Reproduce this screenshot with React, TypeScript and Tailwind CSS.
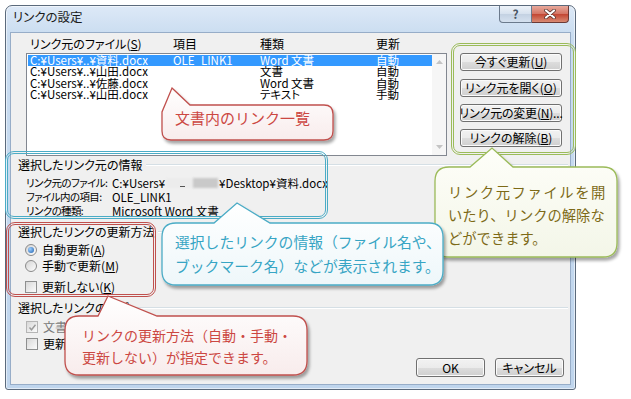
import React from "react";

const btn =
  "flex items-center justify-center whitespace-nowrap rounded-[3px] border border-[#707070] bg-[linear-gradient(#f2f2f2,#ebebeb_50%,#dddddd_50%,#cfcfcf)] text-[12px] leading-none text-black shadow-[inset_0_0_0_1px_#fbfbfb]";

const rows = [
  { file: "C:¥Users¥..¥資料.docx", item: "OLE_LINK1", type: "Word 文書", mode: "自動", sel: true },
  { file: "C:¥Users¥..¥山田.docx", item: "", type: "文書", mode: "自動" },
  { file: "C:¥Users¥..¥佐藤.docx", item: "", type: "Word 文書", mode: "自動" },
  { file: "C:¥Users¥..¥山田.docx", item: "", type: "テキスト", mode: "手動" },
];

function Radio({ on }: { on?: boolean }) {
  return (
    <span className="flex h-[12px] w-[12px] shrink-0 items-center justify-center rounded-full border border-[#8a8a8a] bg-[linear-gradient(135deg,#d4d4d4,#fdfdfd)]">
      {on && <span className="h-[6px] w-[6px] rounded-full bg-[radial-gradient(circle_at_35%_35%,#9fd0ff,#1c5fae)]" />}
    </span>
  );
}

function Check({ on, off }: { on?: boolean; off?: boolean }) {
  return (
    <span
      className={
        "flex h-[12px] w-[12px] shrink-0 items-center justify-center border bg-[linear-gradient(135deg,#d8d8d8,#fbfbfb)] " +
        (off ? "border-[#b5b5b5]" : "border-[#8e8f8f]")
      }
    >
      {on && (
        <svg width="9" height="9" viewBox="0 0 9 9">
          <path d="M1.5 4.5 L3.5 6.8 L7.5 1.8" fill="none" stroke="#9a9a9a" strokeWidth="1.4" />
        </svg>
      )}
    </span>
  );
}

function Group({ label }: { label: string }) {
  return (
    <div className="ml-[7px] mr-[2px] flex h-[14px] items-center">
      <span className="whitespace-nowrap leading-[14px]">{label}</span>
      <span className="ml-[4px] h-[2px] flex-1 border-t border-b border-t-[#d5dfe5] border-b-white" />
    </div>
  );
}

function TitleBar() {
  return (
    <div className="flex h-[26px] items-start">
      <span className="ml-[7px] mt-[3px] text-[12.5px] leading-[16px] text-[#1b1b1b]">リンクの設定</span>
      <div className="ml-auto mr-[6px] flex h-[17px]">
        <div className="flex w-[33px] items-center justify-center rounded-bl-[4px] border border-t-0 border-[#6b7a8c] bg-[linear-gradient(#eef3f9,#d6e1ee_50%,#c3d1e2_50%,#d5e1ef)] text-[12px] font-bold leading-none text-[#4a5563]">
          ?
        </div>
        <div className="flex w-[37px] items-center justify-center rounded-br-[4px] border border-l-0 border-t-0 border-[#6b3a36] bg-[linear-gradient(#e8a99c,#d47463_50%,#c24431_50%,#d98a72)]">
          <svg width="12" height="10" viewBox="0 0 12 10">
            <path d="M2 1.5 L10 8.5 M10 1.5 L2 8.5" stroke="#4a2a26" strokeWidth="3.6" strokeLinecap="round" />
            <path d="M2 1.5 L10 8.5 M10 1.5 L2 8.5" stroke="#ffffff" strokeWidth="2.2" strokeLinecap="round" />
          </svg>
        </div>
      </div>
    </div>
  );
}

function Callouts() {
  return (
    <svg className="pointer-events-none absolute left-0 top-0" width="631" height="399" viewBox="0 0 631 399">
      <defs>
        <filter id="sh" x="-10%" y="-10%" width="130%" height="140%">
          <feDropShadow dx="2" dy="3" stdDeviation="1.4" floodColor="#000" floodOpacity="0.35" />
        </filter>
        <linearGradient id="gr" x1="0" y1="0" x2="0" y2="1">
          <stop offset="0" stopColor="#ffffff" />
          <stop offset="1" stopColor="#f8ecec" />
        </linearGradient>
        <linearGradient id="gb" x1="0" y1="0" x2="0" y2="1">
          <stop offset="0" stopColor="#ffffff" />
          <stop offset="1" stopColor="#eef7fa" />
        </linearGradient>
        <linearGradient id="gg" x1="0" y1="0" x2="0" y2="1">
          <stop offset="0" stopColor="#fefef9" />
          <stop offset="1" stopColor="#f3f6e8" />
        </linearGradient>
      </defs>
      <path
        d="M172 88 L190 105 L324 105 Q333 105 333 114 L333 131 Q333 140 324 140 L171 140 Q162 140 162 131 L162 112 Z"
        fill="url(#gr)"
        stroke="#c0504d"
        strokeWidth="1.3"
        filter="url(#sh)"
      />
      <path
        d="M449 167 L470 167 L492 148 L513 167 L603 167 Q617 167 617 181 L617 243 Q617 257 603 257 L449 257 Q435 257 435 243 L435 181 Q435 167 449 167 Z"
        fill="url(#gg)"
        stroke="#9bbb59"
        strokeWidth="1.3"
        filter="url(#sh)"
      />
      <path
        d="M176 223 L214 223 L237 203 L270 223 L429 223 Q443 223 443 237 L443 271 Q443 285 429 285 L176 285 Q162 285 162 271 L162 237 Q162 223 176 223 Z"
        fill="url(#gb)"
        stroke="#4bacc6"
        strokeWidth="1.3"
        filter="url(#sh)"
      />
      <path
        d="M108 296 L157 316 L293 316 Q307 316 307 330 L307 361 Q307 375 293 375 L79 375 Q65 375 65 361 L65 330 Q65 316 79 316 L98 316 Z"
        fill="url(#gr)"
        stroke="#c0504d"
        strokeWidth="1.3"
        filter="url(#sh)"
      />
    </svg>
  );
}

export default function App() {
  return (
    <div className="relative h-[399px] w-[631px] overflow-hidden bg-white font-['Noto_Sans_CJK_JP',sans-serif] text-black">
      <div className="pl-[5px] pt-[5px] [font-feature-settings:'palt']">
        <div className="flex h-[385px] w-[571px] flex-col rounded-t-[7px] rounded-b-[3px] border border-[#5b6a7c] bg-[linear-gradient(#dde9f7,#c9dcf0_30px,#bfd5ed)] shadow-[inset_0_0_0_1px_rgba(255,255,255,0.55)]">
          <TitleBar />
          <div className="mx-[4px] mb-[4px] flex flex-1 flex-col border border-[#97adc8] bg-[#f0f0f0] text-[12px]">
            <div className="flex">
              <div className="ml-[15px] w-[421px]">
                <div className="mt-[4px] grid h-[14px] grid-cols-[143px_87px_116px_1fr] whitespace-nowrap pl-[4px] leading-[14px]">
                  <span>
                    リンク元のファイル(<u>S</u>)
                  </span>
                  <span>項目</span>
                  <span>種類</span>
                  <span>更新</span>
                </div>
                <div className="mt-[2px] flex h-[103px] border border-[#828790] bg-white">
                  <div className="flex-1 pl-[1px] pt-[1px] text-[11.5px] leading-[11.25px]">
                    {rows.map((r, i) => (
                      <div
                        key={i}
                        className={
                          "grid h-[11.25px] grid-cols-[143px_87px_116px_1fr] whitespace-nowrap pl-[2px] " +
                          (r.sel ? "bg-[#3399ff] text-white" : "")
                        }
                      >
                        <span>{r.file}</span>
                        <span>{r.item}</span>
                        <span>{r.type}</span>
                        <span>{r.mode}</span>
                      </div>
                    ))}
                  </div>
                  <div className="flex w-[14px] flex-col items-center justify-between bg-[#f6f6f6] py-[6px]">
                    <svg width="7" height="4" viewBox="0 0 7 4">
                      <path d="M0 4 L3.5 0 L7 4 Z" fill="#c4c4c4" />
                    </svg>
                    <svg width="7" height="4" viewBox="0 0 7 4">
                      <path d="M0 0 L3.5 4 L7 0 Z" fill="#c4c4c4" />
                    </svg>
                  </div>
                </div>
              </div>
              <div className="ml-[13px] mt-[20px] flex w-[102px] flex-col">
                <div className={btn + " h-[18px]"}>
                  今すぐ更新(<u>U</u>)
                </div>
                <div className={btn + " mt-[8px] h-[18px]"}>
                  リンク元を開く(<u>O</u>)
                </div>
                <div className={btn + " mt-[7px] h-[18px] tracking-[-0.2px]"}>
                  リンク元の変更(<u>N</u>)...
                </div>
                <div className={btn + " mt-[7px] h-[18px]"}>
                  リンクの解除(<u>B</u>)
                </div>
              </div>
            </div>

            <div className="mt-[2px]">
              <Group label="選択したリンク元の情報" />
            </div>
            <div className="ml-[15px] mt-[4px] whitespace-nowrap text-[11.5px] leading-[14px]">
              <div className="flex h-[14px] items-center">
                <span className="w-[86px] shrink-0 text-[10.5px] tracking-[-0.6px]">リンク元のファイル:</span>
                <span>C:¥Users¥</span>
                <span className="relative mx-[1px] inline-block h-[12px] w-[52px]">
                  <span className="absolute left-0 top-[1px] h-[10px] w-[28px] bg-[#ececec] blur-[1px]" />
                  <span className="absolute left-[14px] top-[9px] h-[1px] w-[5px] bg-[#555]" />
                  <span className="absolute left-[27px] top-[1px] h-[10px] w-[25px] bg-[#c9c9c9] blur-[1px]" />
                </span>
                <span>¥Desktop¥資料.docx</span>
              </div>
              <div className="flex h-[14px] items-center">
                <span className="w-[86px] shrink-0 text-[10.5px] tracking-[-0.6px]">ファイル内の項目:</span>
                <span>OLE_LINK1</span>
              </div>
              <div className="flex h-[14px] items-center">
                <span className="w-[86px] shrink-0 text-[10.5px] tracking-[-0.6px]">リンクの種類:</span>
                <span>Microsoft Word 文書</span>
              </div>
            </div>

            <div className="mt-[7px]">
              <Group label="選択したリンクの更新方法" />
            </div>
            <div className="ml-[14px] mt-[3px]">
              <div className="flex h-[16px] items-center gap-[5px]">
                <Radio on />
                <span>
                  自動更新(<u>A</u>)
                </span>
              </div>
              <div className="flex h-[16px] items-center gap-[5px]">
                <Radio />
                <span>
                  手動で更新(<u>M</u>)
                </span>
              </div>
              <div className="mt-[5px] flex h-[16px] items-center gap-[5px]">
                <Check />
                <span>
                  更新しない(<u>K</u>)
                </span>
              </div>
            </div>

            <div className="mt-[6px]">
              <Group label="選択したリンクのオプ" />
            </div>
            <div className="ml-[15px] mt-[4px]">
              <div className="flex h-[16px] items-center gap-[5px] text-[#7a7a7a]">
                <Check on off />
                <span>文書</span>
              </div>
              <div className="mt-[1px] flex h-[16px] items-center gap-[5px]">
                <Check />
                <span>更新</span>
              </div>
            </div>

            <div className="mr-[6px] mt-[6px] flex justify-end gap-[10px]">
              <div className={btn + " h-[19px] w-[69px] border-[#3c7fb1] shadow-[inset_0_0_0_1px_#8fd6f5]"}>OK</div>
              <div className={btn + " h-[19px] w-[69px]"}>キャンセル</div>
            </div>
          </div>
        </div>
      </div>

      <div className="absolute left-[451px] top-[43px] h-[112px] w-[125px] rounded-[9px] border-[3px] border-double border-[#9bbb59]" />
      <div className="absolute left-[5px] top-[151px] h-[68px] w-[323px] rounded-[9px] border-[3px] border-double border-[#4bacc6]" />
      <div className="absolute left-[6px] top-[222px] h-[75px] w-[150px] rounded-[9px] border-[3px] border-double border-[#c0504d]" />

      <Callouts />

      <div className="absolute left-[175px] top-[108px] text-[15px] leading-[20px] text-[#cc4742]">文書内のリンク一覧</div>
      <div className="absolute left-[448px] top-[180px] text-[14.3px] leading-[23px] text-[#7d6a17]">
        <div className="tracking-[1.6px]">リンク元ファイルを開</div>
        <div>いたり、リンクの解除な</div>
        <div>どができます。</div>
      </div>
      <div className="absolute left-[175px] top-[230px] text-[14.8px] leading-[24px] text-[#37a5c4]">
        <div>選択したリンクの情報（ファイル名や、</div>
        <div>ブックマーク名）などが表示されます。</div>
      </div>
      <div className="absolute left-[82px] top-[324px] text-[14px] leading-[22px] text-[#cc4742]">
        <div>リンクの更新方法（自動・手動・</div>
        <div>更新しない）が指定できます。</div>
      </div>
    </div>
  );
}
